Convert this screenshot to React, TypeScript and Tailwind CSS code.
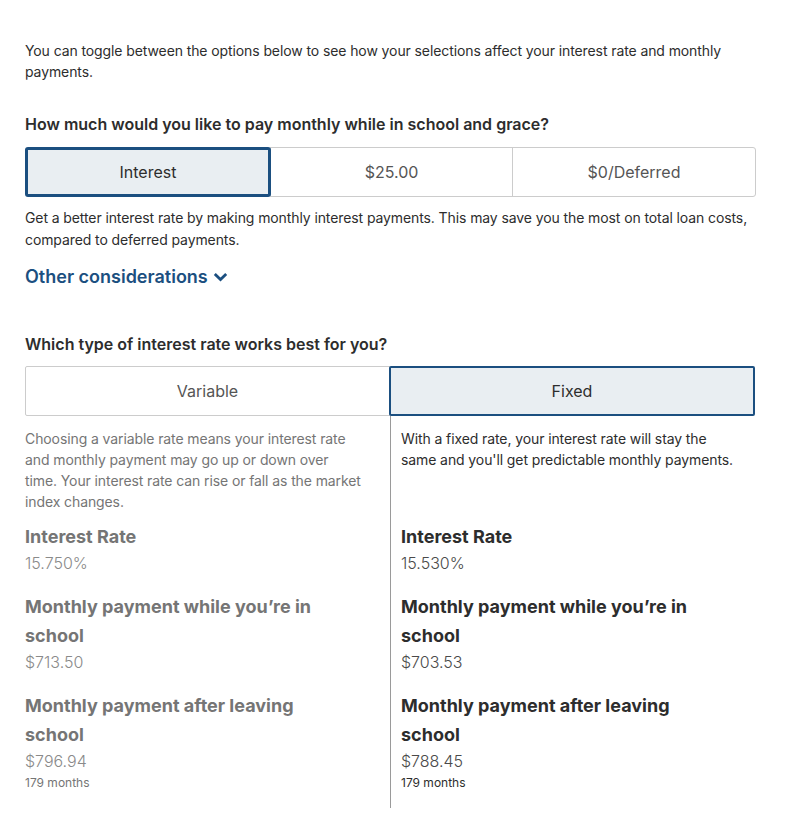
import React from "react";

const payOptions = ["Interest", "$25.00", "$0/Deferred"];

const rates = [
  {
    name: "Variable",
    desc: [
      "Choosing a variable rate means your interest rate",
      "and monthly payment may go up or down over",
      "time. Your interest rate can rise or fall as the market",
      "index changes.",
    ],
    rate: "15.750%",
    inSchool: "$713.50",
    after: "$796.94",
  },
  {
    name: "Fixed",
    desc: ["With a fixed rate, your interest rate will stay the", "same and you'll get predictable monthly payments."],
    rate: "15.530%",
    inSchool: "$703.53",
    after: "$788.45",
  },
];

export default function App() {
  const selectedPay = 0;
  const selectedRate = 1;

  return (
    <div className="min-h-screen bg-white text-[#2d2d2d]" style={{ fontFamily: "Inter, 'Noto Sans', sans-serif" }}>
      <div className="w-[730px] ml-[25px] pt-[40px]">
        <p className="text-[14px] leading-[21px] tracking-[-0.1px]">
          You can toggle between the options below to see how your selections affect your interest rate and monthly
          payments.
        </p>

        <h3 className="mt-[30px] text-[16px] leading-[24px] font-semibold">
          How much would you like to pay monthly while in school and grace?
        </h3>

        <div className="mt-[11px] grid grid-cols-[246px_242px_243px]">
          {payOptions.map((opt, i) => (
            <button
              key={opt}
              className={
                i === selectedPay
                  ? "relative z-10 h-[50px] rounded-[3px] border-[3px] border-[#1b4f80] bg-[#e9eef2] text-[16px] text-[#2d2d2d]"
                  : "h-[50px] -ml-px border border-[#cccccc] text-[16px] text-[#555555] last:rounded-r-[3px]"
              }
            >
              {opt}
            </button>
          ))}
        </div>

        <p className="mt-[10px] text-[14px] leading-[22px] tracking-[-0.1px]">
          Get a better interest rate by making monthly interest payments. This may save you the most on total loan costs,
          compared to deferred payments.
        </p>

        <button className="mt-[14px] flex items-center gap-[5px] text-[18px] leading-[24px] font-semibold text-[#1b4f80]">
          Other considerations
          <svg width="15" height="10" viewBox="0 0 15 10" fill="none">
            <path d="M1.8 2 7.5 7.6 13.2 2" stroke="#1b4f80" strokeWidth="2.8" />
          </svg>
        </button>

        <h3 className="mt-[43px] text-[16px] leading-[24px] font-semibold">
          Which type of interest rate works best for you?
        </h3>

        <div className="mt-[10px] grid grid-cols-2">
          {rates.map((r, i) => (
            <button
              key={r.name}
              className={
                i === selectedRate
                  ? "relative z-10 h-[50px] -ml-px rounded-[2px] border-2 border-[#1b4f80] bg-[#e9eef2] text-[16px] text-[#2d2d2d]"
                  : "h-[50px] rounded-l-[2px] border border-[#cccccc] text-[16px] text-[#555555]"
              }
            >
              {r.name}
            </button>
          ))}
        </div>

        <div className="grid grid-cols-2">
          {rates.map((r, i) => {
            const active = i === selectedRate;
            const head = active ? "text-[#2d2d2d]" : "text-[#757575]";
            const val = active ? "text-[#4a4a4a]" : "text-[#8a8a8a]";
            return (
              <div
                key={r.name}
                className={
                  active
                    ? "border-l border-[#9a9a9a] pl-[10px] pr-[16px] pt-[12px] pb-[17px]"
                    : "pr-[20px] pt-[12px] pb-[17px]"
                }
              >
                <p
                  className={`min-h-[84px] text-[14px] leading-[21px] tracking-[-0.1px] ${
                    active ? "text-[#2d2d2d]" : "text-[#757575]"
                  }`}
                >
                  {r.desc.map((line) => (
                    <span key={line} className="block whitespace-nowrap">
                      {line}
                    </span>
                  ))}
                </p>

                <h4 className={`mt-[10px] max-w-[310px] text-[18px] leading-[29px] font-bold ${head}`}>Interest Rate</h4>
                <p className={`text-[16px] leading-[24px] font-light ${val}`}>{r.rate}</p>

                <h4 className={`mt-[17px] max-w-[310px] text-[18px] leading-[29px] font-bold ${head}`}>
                  Monthly payment while you’re in school
                </h4>
                <p className={`text-[16px] leading-[24px] font-light ${val}`}>{r.inSchool}</p>

                <h4 className={`mt-[17px] max-w-[310px] text-[18px] leading-[29px] font-bold ${head}`}>
                  Monthly payment after leaving school
                </h4>
                <p className={`text-[16px] leading-[24px] font-light ${val}`}>{r.after}</p>
                <p className={`mt-[2px] text-[12px] leading-[16px] ${active ? "text-[#2d2d2d]" : "text-[#757575]"}`}>
                  179 months
                </p>
              </div>
            );
          })}
        </div>
      </div>
    </div>
  );
}
